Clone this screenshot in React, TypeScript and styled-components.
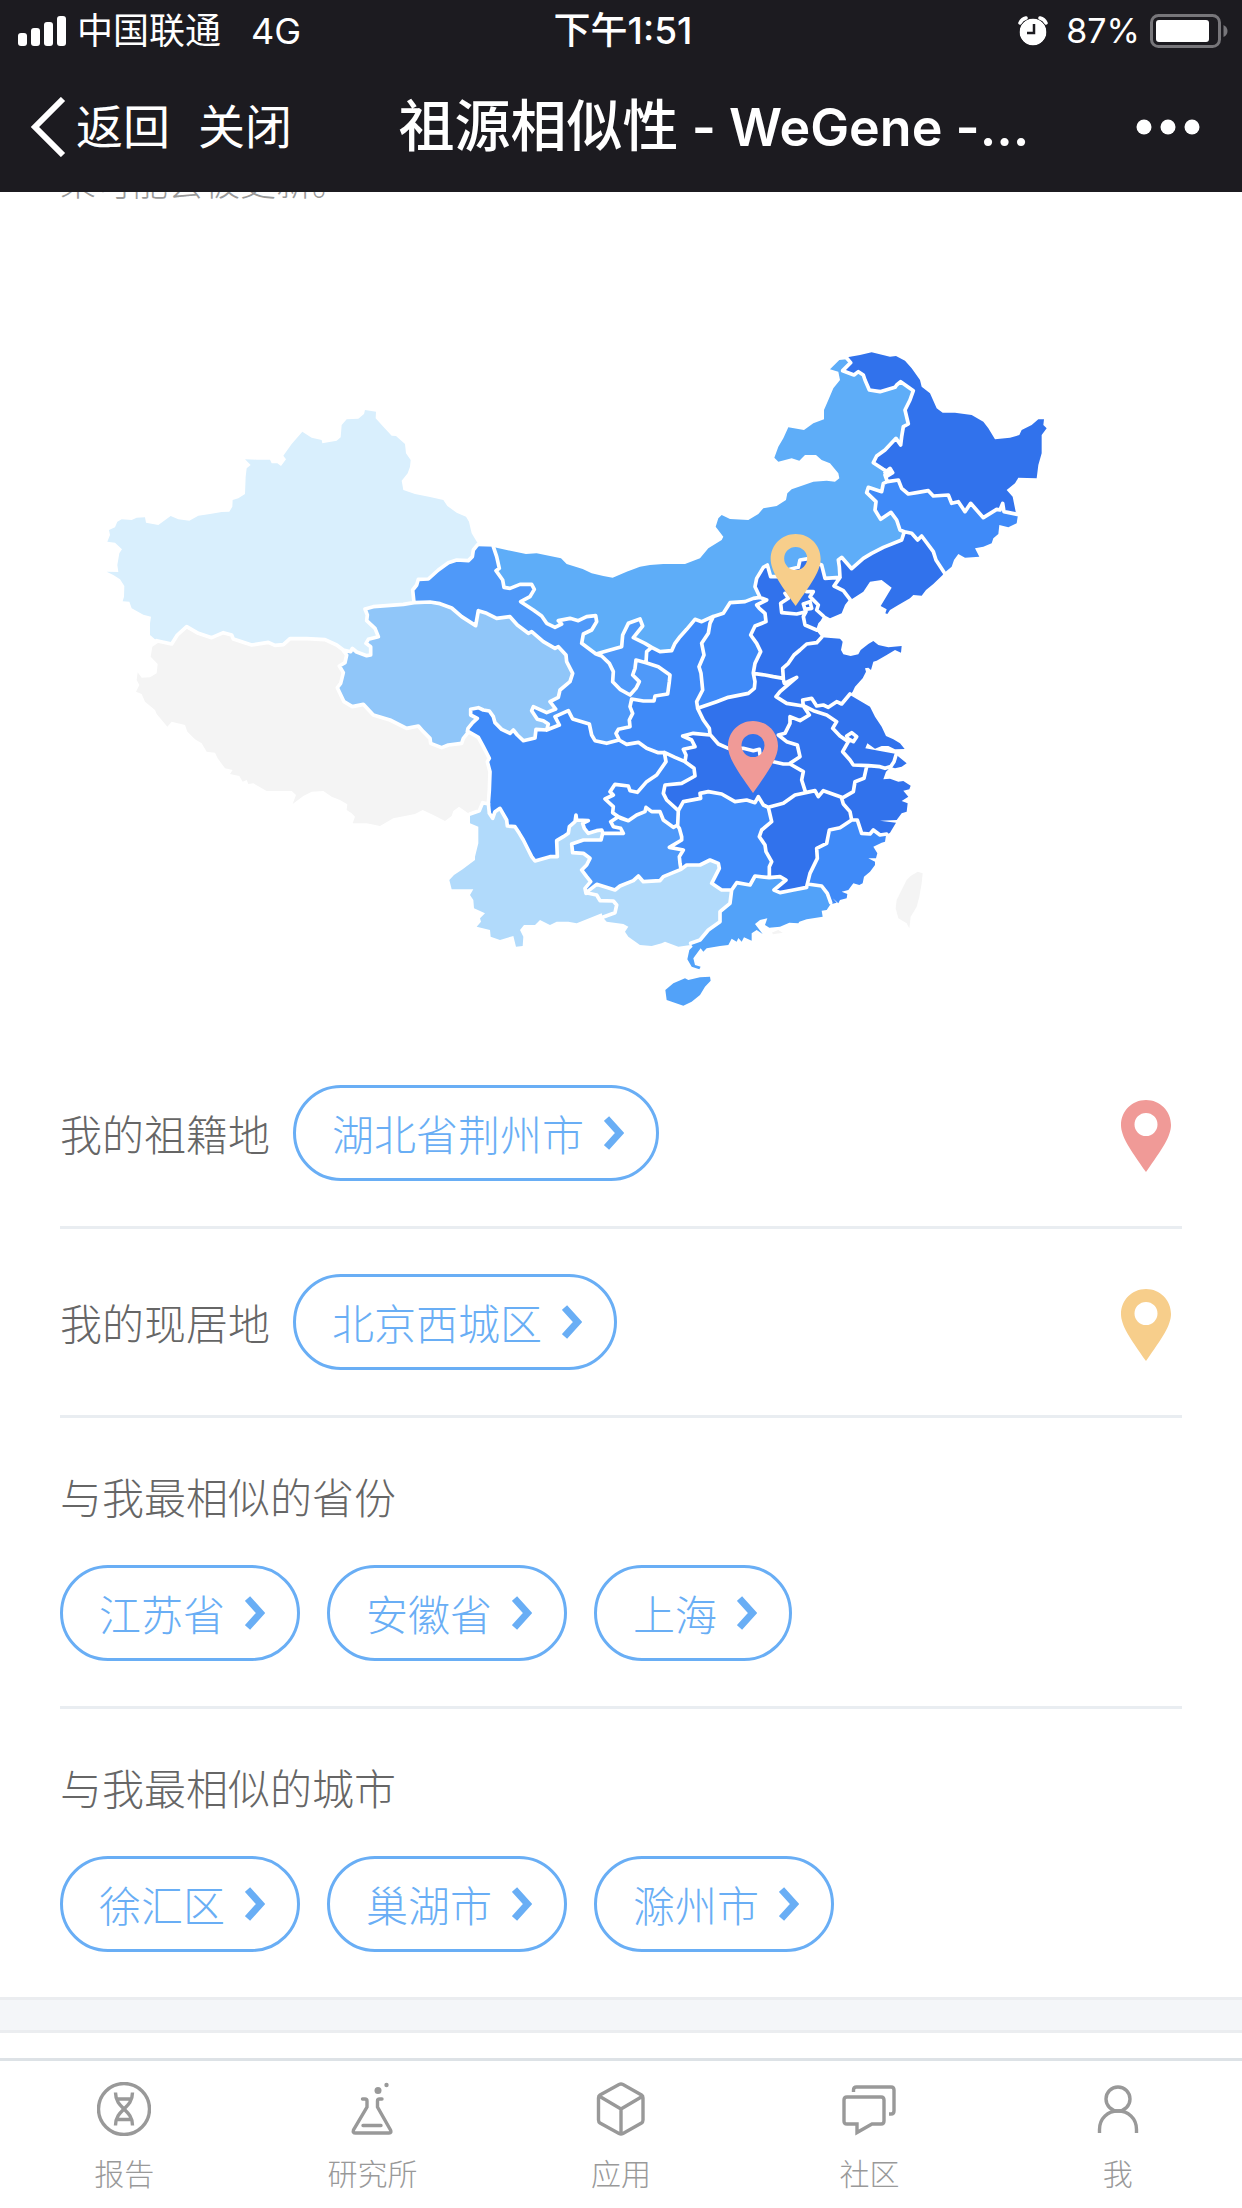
import React from 'react';
import styled, { createGlobalStyle } from 'styled-components';

const color = {
  bar: '#1c1b20',
  text: '#666666',
  muted: '#999999',
  link: '#69aef5',
  line: '#e9edf1',
  band: '#f4f6f9',
  origin: '#f09a97',
  home: '#f7ce8b',
};

const GlobalStyle = createGlobalStyle`
  * { box-sizing: border-box; }
  body {
    margin: 0;
    background: #ffffff;
    font-family: Inter, "Noto Sans CJK SC", sans-serif;
    color: ${color.text};
  }
  button { font: inherit; color: inherit; background: none; border: 0; padding: 0; cursor: pointer; }
`;

const Page = styled.div`
  display: flex;
  flex-direction: column;
  min-height: 100vh;
`;

const Header = styled.header`
  position: sticky;
  top: 0;
  z-index: 1;
  height: 192px;
  background: ${color.bar};
  color: #ffffff;
`;

const StatusBar = styled.div`
  display: grid;
  grid-template-columns: 1fr auto 1fr;
  align-items: center;
  height: 62px;
  padding: 0 14px 0 18px;
  font-size: 36px;
  line-height: 60px;
`;

const StatusGroup = styled.div<{ $end?: boolean }>`
  display: flex;
  align-items: center;
  justify-content: ${(p) => (p.$end ? 'flex-end' : 'flex-start')};
  gap: 10px;
`;

const Network = styled.span`
  margin-left: 20px;
`;

const Clock = styled.time`
  font-size: 37px;
  font-weight: 500;
`;

const BatteryText = styled.span`
  margin-left: 8px;
  font-size: 34px;
`;

const NavBar = styled.nav`
  display: flex;
  align-items: center;
  height: 130px;
  padding: 0 42px 0 30px;
`;

const NavButton = styled.button`
  && {
    display: flex;
    align-items: center;
    gap: 10px;
    font-size: 47px;
    line-height: 72px;
  }
  & + & { margin-left: 28px; }
`;

const Title = styled.h1`
  flex: 1;
  margin: 0;
  text-align: center;
  white-space: nowrap;
  font-size: 56px;
  line-height: 84px;
  font-weight: 500;
`;

const Latin = styled.span`
  font-size: 52px;
  font-weight: 600;
`;

const Main = styled.main`
  flex: 1;
`;

const Notice = styled.p`
  margin: -36px 60px 30px;
  font-size: 36px;
  line-height: 54px;
  font-weight: 300;
  color: ${color.muted};
`;

const MapDrawing = styled.svg`
  display: block;
  width: 100%;
  height: auto;
`;

const Details = styled.div`
  padding: 0 60px;
`;

const Row = styled.section<{ $stacked?: boolean }>`
  display: flex;
  flex-direction: ${(p) => (p.$stacked ? 'column' : 'row')};
  align-items: ${(p) => (p.$stacked ? 'flex-start' : 'center')};
  gap: ${(p) => (p.$stacked ? '30px' : '23px')};
  padding: 45px 0;
  border-bottom: 3px solid ${color.line};
  &:last-child { border-bottom: 0; }
`;

const Label = styled.h2<{ $inline?: boolean }>`
  margin: 0;
  padding-top: ${(p) => (p.$inline ? '6px' : '0')};
  font-size: 42px;
  line-height: 72px;
  font-weight: 300;
`;

const PinSlot = styled.span`
  display: flex;
  margin-left: auto;
  padding: 6px 11px 0 0;
`;

const Pills = styled.div`
  display: flex;
  flex-wrap: wrap;
  gap: 27px;
`;

const PillButton = styled.button`
  && {
    display: flex;
    align-items: center;
    gap: 20px;
    height: 96px;
    padding: 0 32px 0 36px;
    border: 3px solid ${color.link};
    border-radius: 48px;
    color: ${color.link};
    font-size: 42px;
    line-height: 72px;
    font-weight: 300;
  }
`;

const PillText = styled.span`
  padding-top: 6px;
`;

const Band = styled.div`
  height: 36px;
  background: ${color.band};
  border: solid #ebedf0;
  border-width: 3px 0;
`;

const TabBar = styled.nav`
  position: sticky;
  bottom: 0;
  display: flex;
  height: 150px;
  border-top: 3px solid #dde2e6;
  background: #ffffff;
`;

const Tab = styled.a`
  flex: 1;
  display: flex;
  flex-direction: column;
  align-items: center;
  gap: 14px;
  padding-top: 21px;
  color: ${color.muted};
  font-size: 30px;
  line-height: 48px;
  font-weight: 300;
  text-decoration: none;
`;

/* ---- Map geometry: border arcs shared between neighbouring provinces ---- */

type Point = [number, number];

const tiles: Record<string, Point> = {
  west: [270, 1170],
  mid: [1200, 1500],
  north: [1950, 990],
  east: [1920, 1800],
};

const arc = (...parts: [string, string][]): Point[] =>
  parts.flatMap(([tile, text]) => {
    const [ox, oy] = tiles[tile];
    const n = text.split(' ').map(Number);
    const points: Point[] = [];
    for (let i = 0; i < n.length; i += 2) points.push([n[i] + ox, n[i + 1] + oy]);
    return points;
  });

const arcs: Record<string, Point[]> = {
  xjOut: arc(['west', '200 752 180 735 180 700 183 680 160 674 125 655 118 635 98 634 102 620 103 588 90 568 70 555 50 545 85 546 82 525 88 490 96 478 75 458 52 455 60 435 57 420 75 412 82 395 95 388 125 390 140 383 165 382 168 398 205 405 242 378 265 388 298 392 325 377 360 372 395 366 418 365 427 350 428 330 445 325 465 312 467 260 470 235 482 225 465 208 500 209 540 209 545 220 562 220 573 228 588 208 580 197 605 162 637 125 665 143 695 150 697 160 740 152 752 142 755 105 770 88 805 86 822 72 825 60 858 65 857 85 880 110 905 137 918 138 945 162 948 190 962 210 960 230 953 250 935 272 940 300 975 312 1020 321 1060 330 1072 348 1100 368 1128 380 1137 395 1145 430 1163 460']),
  xjGs: arc(['west', '1163 464 1150 480 1147 500 1135 512 1100 510 1075 518 1045 540 1015 567 985 568 980 585 968 600 972 638']),
  xjQh: arc(['west', '972 638 940 643 900 646 850 650 825 657 832 675 830 692 855 715 865 740 835 748 828 760 842 770 842 795 830 797 800 786 787 775 782 785 760 780']),
  xjXz: arc(['west', '760 780 740 765 705 749 650 746 600 746 580 764 555 766 535 757 485 765 430 747 425 735 400 728 365 743 325 730 290 710 262 735 245 762 200 752']),
  xzOut: arc(['west', '205 758 187 770 182 800 203 822 200 850 180 862 155 863 143 847 140 870 148 885 138 905 155 912 165 935 195 960 200 972 232 1010 245 995 285 1005 292 1025 315 1048 335 1060 350 1085 375 1088 383 1105 405 1135 428 1140 420 1152 448 1158 458 1175 470 1170 475 1182 490 1180 530 1203 605 1203 618 1215 608 1242 640 1218 665 1205 700 1203 725 1220 750 1230 772 1243 770 1260 785 1270 795 1280 788 1300 830 1300 870 1308 910 1285 975 1272 998 1260 1030 1275 1065 1293 1085 1278 1090 1263 1107 1250 1138 1272']),
  xzQh: arc(['west', '760 782 770 795 765 818 748 828 760 848 752 880 742 893 762 935 787 950 820 943 850 975 900 990 950 1015 985 1008 1000 1025 1020 1045 1022 1060 1055 1073 1075 1065 1115 1060 1120 1045 1132 1030']),
  qhSc: arc(['mid', '202 695 204 685 218 668 232 655 212 645 212 628 235 623 250 630 268 633 280 650 285 668 305 688 330 700 340 690 352 705 370 722 405 714 408 688 440 690']),
  qhGs: arc(['mid', '42 308 90 306 120 311 155 324 185 350 227 377 235 332 260 340 290 355 330 350 352 375 385 400 395 395 430 425 465 445 475 440 498 465 500 485 518 520 510 545 480 570 475 592 450 605 467 627 440 638 400 620 395 632 412 658 430 662 445 672 440 690']),
  gsOut: arc(['mid', '233 139 283 140']),
  gsNm: arc(['mid', '280 140 290 170 298 205 288 212 308 240 312 262 330 265 360 253 395 253 403 268 390 290 362 305 400 330 425 348 440 370 465 382 485 372 475 362 510 355 535 362 560 350 587 347 590 365 575 390 550 402 545 430 565 445 588 462']),
  nmNx: arc(['mid', '588 462 630 450 665 440 668 405 685 370 720 357 728 378 700 413 735 430 755 442']),
  nxSx: arc(['mid', '755 442 740 455 738 488']),
  nxGs: arc(['mid', '738 488 708 480 705 505 698 525 718 545 708 565 690 585 660 568 638 545 640 515 628 490 605 468 588 462']),
  gsSx: arc(['mid', '738 488 775 500 810 525 808 545 803 582 765 588 762 603 730 603 695 597 690 620 698 640 688 660 690 680 655 688 648 700 657 718']),
  gsSc: arc(['mid', '440 690 478 675 465 650 505 632 518 657 568 672 575 705 585 722 620 730 657 720']),
  scSx: arc(['mid', '657 720 680 733 715 727 740 745 775 758 793 757']),
  scCq: arc(['mid', '793 757 798 785 770 825 740 845 712 877 690 872 685 858 645 853 630 875 640 885 615 897 640 920 638 938 662 955 685 962']),
  scGz: arc(['mid', '685 962 655 950 632 965 640 980 662 985 670 1000 610 1000']),
  scYn: arc(['mid', '608 998 605 990 590 992 565 1000 553 985 548 970 565 962 530 960 528 945 525 965 508 980 505 1000 490 1010 470 1022 472 1070 450 1070 405 1083 395 1070 385 1050 370 1020 358 1000 345 980 322 978 320 960 300 925 285 935 278 955 268 940']),
  scXz: arc(['mid', '205 695 235 712 250 740 268 775 262 785 270 815 268 870 265 910 268 940']),
  xzYn: arc(['mid', '266 912 248 908 238 932 210 942']),
  ynOut: arc(['mid', '210 942 210 970 235 980 235 1030 225 1070 225 1080 188 1108 162 1125 148 1140 155 1168 220 1168 210 1185 220 1200 222 1225 255 1240 240 1255 243 1265 230 1280 270 1290 272 1310 300 1320 340 1308 348 1340 368 1338 370 1310 360 1290 372 1275 405 1275 420 1260 450 1275 470 1265 505 1265 530 1270 560 1258 605 1240']),
  ynGx: arc(['mid', '558 1178 590 1185 600 1202 640 1203 650 1215 645 1238 608 1252']),
  ynGz: arc(['mid', '608 1000 603 1020 550 1020 515 1032 518 1058 550 1060 570 1075 560 1095 545 1110 560 1130 572 1145 555 1165 558 1180']),
  gzGx: arc(['mid', '558 1178 590 1153 645 1170 660 1158 700 1142 715 1128 730 1145 780 1142 790 1130 843 1108']),
  gzHn: arc(['mid', '843 1108 840 1090 838 1070 850 1050 808 1042 845 1020 845 1010 838 985 833 978']),
  gzCq: arc(['mid', '685 962 710 945 735 935 738 922 755 935 780 935 790 960 820 982 833 975']),
  cqHn: arc(['mid', '833 975 835 932']),
  cqHb: arc(['mid', '835 932 800 900 790 880 795 855 845 850 885 828 882 805 855 785']),
  cqSx: arc(['mid', '793 757 825 772 855 785']),
  sxHb: arc(['mid', '855 785 858 765 850 748 885 740 875 720 848 708 880 700 930 705']),
  sxHa: arc(['mid', '930 703 928 685 910 660 893 625']),
  sxSxi: arc(['mid', '893 625 890 605 908 570 903 520 897 500 912 465 905 430 925 400 930 370 940 350']),
  nmSx: arc(['mid', '755 442 780 455 815 452 825 430 840 410 860 388 885 358 905 365 938 350']),
  nmSxi: arc(['mid', '938 350 970 340 990 308 1035 305 1060 295 1080 292']),
  sxiHe: arc(['mid', '1080 292 1100 300 1070 315 1078 325 1095 340 1098 365 1065 378 1052 405 1070 430 1082 455 1065 490 1060 518']),
  sxiHa: arc(['mid', '1060 520 1065 545 1063 565 1045 580 985 592 950 605 893 625']),
  heHa: arc(['mid', '1060 520 1095 525 1120 530 1150 535']),
  heSd: arc(['east', '430 235 428 205 445 190 462 165 480 150 500 132 530 128 545 112']),
  haSd: arc(['east', '430 238 433 250 470 232 455 245 420 275 408 290 440 310 490 318']),
  sdJs: arc(['east', '490 318 488 300 515 295 530 318 550 315 565 322 590 305 605 312 630 282']),
  jsAh: arc(['east', '492 318 520 332 560 345 590 365 578 385 600 408 625 425 608 455 630 480 640 495 685 497']),
  haAh: arc(['east', '490 318 508 345 480 362 450 350 450 370 435 400 415 405 440 425 472 435 480 470 450 490']),
  haHb: arc(['east', '210 403 235 432 265 445 310 445 340 452 358 448 360 465 400 485 430 492 450 492']),
  hbAh: arc(['east', '450 492 490 515 485 540 497 578']),
  hbJx: arc(['east', '497 578 465 585 430 610 385 622']),
  hbHn: arc(['east', '385 622 370 615 355 590 345 608 320 600 285 605 245 582 205 575 180 580 182 595 130 605 115 632']),
  hnJx: arc(['east', '385 622 395 665 365 690 358 710 375 735 378 755 395 785 388 800 388 833']),
  hnGd: arc(['east', '388 833 345 828 330 855 290 848 275 870']),
  hnGx: arc(['east', '123 808 140 795 180 795 210 780 235 790 238 805 215 850 245 870 275 870']),
  gxGd: arc(['east', '275 870 270 910 240 935 240 965 205 990 180 1020 152 1030']),
  jxGd: arc(['east', '388 833 420 830 438 840 402 870 420 878 460 870 500 862']),
  jxFj: arc(['east', '500 860 510 820 532 775 530 745 560 730 568 690 600 683 635 660']),
  fjGd: arc(['east', '502 852 545 858 562 880 572 908']),
  jxAh: arc(['east', '497 578 525 572 535 590 550 572 605 592']),
  jxZj: arc(['east', '605 595 610 612 630 635 635 660']),
  ahZj: arc(['east', '605 595 640 575 645 545 672 535 680 500 685 497']),
  jsZj: arc(['east', '685 497 720 500 735 505 750 500']),
  zjFj: arc(['east', '635 660 652 660 665 700 690 702 700 690 720 705 740 702']),
  gxOut: arc(['mid', '872 1335 835 1340 795 1325 785 1330 755 1338 720 1335 685 1310 675 1295 685 1280 670 1272 620 1265 608 1252']),
  jsOut: arc(['east', '630 285 690 320 705 350 725 380 738 408 760 418 780 430 794 447 765 448 745 438 725 438 705 446 682 430 676 445 720 453 765 461 800 490 785 500 765 505 750 500']),
  zjOut: arc(['east', '750 503 738 515 730 538 750 536 775 545 790 543 812 557 808 568 790 572 805 590 785 603 803 610 800 635 785 640 770 660 720 662 768 668 750 698 738 706']),
  fjOut: arc(['east', '738 706 735 725 725 728 700 740 712 760 708 775 685 775 705 785 705 795 690 815 672 830 668 850 658 855 640 850 625 870 605 875 622 882 620 895 600 900 595 910 578 895 590 908 575 912']),
  gdOut: arc(['east', '572 912 560 930 545 932 548 950 500 958 478 965 475 970 448 968 420 980 388 983 375 975 382 955 360 960 345 972 368 1002 350 990 335 1000 335 1022 312 1012 305 1025 295 1014 290 1025 275 1016 265 1035 240 1038 200 1045 190 1055 182 1045 160 1075 165 1095 182 1100 178 1108 155 1100 142 1078 148 1050 158 1040 152 1032']),
  sdOut: arc(['east', '545 112 600 116 608 125 603 150 610 163 632 168 655 163 662 150 685 132 700 123 715 135 745 142 785 138 783 158 765 150 740 165 710 182 700 185 693 210 685 203 675 205 678 215 668 235 645 260 638 275 630 285']),
  nmHe: arc(['north', '330 802 315 770 320 745 340 712 352 705 362 740 385 740 420 718 445 712 450 690 480 685 500 700 515 705 525 745 570 742']),
  heLn: arc(['north', '570 742 552 768 580 782 600 808']),
  nmLn: arc(['north', '570 742 568 710 565 690 575 682 605 716 640 685 665 670 700 652 755 630 763 605']),
  nmJl: arc(['north', '763 605 750 600 740 570 723 547 692 568 675 540 678 515 650 488 655 472 695 485 700 460 712 455']),
  nmHlj: arc(['north', '712 455 705 435 720 428 700 418 670 398 680 378 705 360 738 325 752 345 755 320 760 290 775 282 765 240 780 210 790 182 752 155 740 165 735 172 690 185 658 180 645 150 640 135 625 125 612 135 578 122 602 98 590 84']),
  hljJl: arc(['north', '712 455 745 450 755 475 775 492 800 488 835 482 850 498 895 495 905 520 925 515 945 545 962 520 1000 563 1040 538 1050 540 1058 520 1062 545 1102 553']),
  jlLn: arc(['north', '763 605 785 610 803 630 815 618 850 665 858 690 882 727']),
  hljOut: arc(['north', '592 82 630 75 665 67 720 80 738 78 765 92 785 115 810 150 815 170 840 190 860 235 878 248 915 248 965 255 1000 275 1015 295 1035 328 1080 323 1108 315 1115 300 1145 285 1165 268 1182 268 1180 285 1190 295 1175 315 1175 370 1165 405 1160 445 1105 443 1095 460 1070 480 1088 500 1097 545']),
  jlOut: arc(['north', '1103 560 1100 580 1075 592 1048 585 1045 612 1030 625 1025 640 1000 650 975 655 988 680 945 683 925 672 912 690 905 710 885 727']),
  lnOut: arc(['north', '878 735 850 762 828 780 815 797 790 795 780 805 745 825 720 840 712 852 706 850 710 838 692 828 725 773 695 750 660 755 640 785 605 808']),
  heOut: arc(['north', '598 808 585 825 575 850 540 865 522 855 512 872 505 880 498 900 515 922']),
  nmOut: arc(
    ['north', '590 88 568 90 540 118 565 125 570 150 550 175 535 210 522 240 522 268 490 280 462 300 415 292 400 325 385 350 373 383 385 395 425 385 448 392 465 375 498 375 515 390 540 400 565 430 568 445 555 455 530 452 490 455 462 465 425 478 412 490 408 510 380 528 340 535 325 552 295 570 240 567 215 555 205 565 197 590 220 620 215 630 175 655 150 685 105 702 40 702 0 705'],
    ['mid', '720 200 680 215 638 233 610 228 575 220 548 207 500 192 483 175 410 160 378 162 283 142'],
  ),
  hainanOut: arc(['east', '135 1135 145 1140 180 1132 210 1130 212 1142 195 1160 180 1185 155 1205 130 1217 80 1200 76 1170 100 1150']),
  taiwanOut: arc(['east', '833 815 848 820 845 850 838 890 830 920 812 950 808 985 800 970 775 955 767 925 770 900 785 870 800 840 812 828']),
  hongkongOut: arc(['east', '395 998 415 990 428 998 400 1003']),
  // Beijing, Tianjin, Shanghai and inland lake outlines
  beijing: arc(['north', '405 790 415 805 392 820 395 848 440 852 468 845 460 860 465 885 500 900']),
  tianjin: arc(['north', '470 785 490 785 480 800 505 825 500 840 520 858']),
  enclave: arc(['north', '460 822 480 815 485 835 465 838 460 822']),
  shanghai: arc(['east', '768 465 762 485 750 503']),
  lake: arc(['east', '620 408 635 398 650 410 640 425 622 415']),
  nenjiang: arc(['north', '705 428 720 415 728 428 712 438']),
};

const shades = {
  none: '#f4f4f4',
  faint: '#d9effd',
  pale: '#b1dafb',
  soft: '#90c6f9',
  sky: '#5eadf8',
  azure: '#52a2f9',
  clear: '#4f99f9',
  strong: '#3f8af8',
  deep: '#3172ec',
};

const provinces: { name: string; shade: keyof typeof shades; ring: string }[] = [
  { name: '新疆', shade: 'faint', ring: 'xjOut xjGs xjQh xjXz' },
  { name: '西藏', shade: 'none', ring: '-xjXz xzQh scXz xzYn -xzOut' },
  { name: '青海', shade: 'soft', ring: 'xjQh xzQh qhSc -qhGs' },
  { name: '甘肃', shade: 'clear', ring: '-xjGs gsOut gsNm -nxGs gsSx -gsSc -qhGs' },
  { name: '宁夏', shade: 'clear', ring: 'nmNx nxSx nxGs' },
  { name: '内蒙古', shade: 'sky', ring: 'nmOut gsNm nmNx nmSx nmSxi nmHe nmLn nmJl nmHlj' },
  { name: '黑龙江', shade: 'deep', ring: 'hljOut -hljJl nmHlj' },
  { name: '吉林', shade: 'strong', ring: 'hljJl jlOut -jlLn nmJl' },
  { name: '辽宁', shade: 'deep', ring: 'jlLn lnOut -heLn nmLn' },
  { name: '河北', shade: 'deep', ring: 'nmHe heLn heOut -heSd -heHa -sxiHe' },
  { name: '山西', shade: 'strong', ring: 'nmSxi sxiHe sxiHa sxSxi' },
  { name: '陕西', shade: 'strong', ring: 'nmSx -sxSxi -sxHa -sxHb -cqSx -scSx -gsSx -nxSx' },
  { name: '四川', shade: 'strong', ring: 'qhSc gsSc scSx scCq scGz scYn -scXz' },
  { name: '重庆', shade: 'strong', ring: 'cqSx -cqHb -cqHn -gzCq -scCq' },
  { name: '贵州', shade: 'clear', ring: 'gzCq -gzHn -gzGx -ynGz -scGz' },
  { name: '云南', shade: 'pale', ring: 'xzYn ynOut -ynGx -ynGz scYn' },
  { name: '广西', shade: 'pale', ring: 'gzGx hnGx gxGd gxOut -ynGx' },
  { name: '湖北', shade: 'deep', ring: 'cqHb sxHb haHb hbAh hbJx hbHn' },
  { name: '河南', shade: 'deep', ring: '-sxiHa heHa haSd haAh -haHb sxHa' },
  { name: '山东', shade: 'deep', ring: 'heSd sdOut -sdJs -haSd' },
  { name: '江苏', shade: 'deep', ring: 'sdJs jsOut -jsZj -jsAh' },
  { name: '安徽', shade: 'deep', ring: 'jsAh -ahZj -jxAh -hbAh -haAh' },
  { name: '浙江', shade: 'deep', ring: 'jsZj zjOut -zjFj -jxZj ahZj' },
  { name: '福建', shade: 'strong', ring: 'zjFj fjOut -fjGd jxFj' },
  { name: '江西', shade: 'deep', ring: 'jxAh jxZj -jxFj -jxGd -hnJx -hbJx' },
  { name: '湖南', shade: 'strong', ring: '-hbHn hnJx hnGd -hnGx gzHn cqHn' },
  { name: '广东', shade: 'azure', ring: '-hnGd jxGd fjGd gdOut -gxGd' },
  { name: '海南', shade: 'azure', ring: 'hainanOut' },
  { name: '台湾', shade: 'none', ring: 'taiwanOut' },
  { name: '香港', shade: 'none', ring: 'hongkongOut' },
];

const ringPath = (ring: string) =>
  'M' +
  ring
    .split(' ')
    .flatMap((key) => (key[0] === '-' ? [...arcs[key.slice(1)]].reverse() : arcs[key]))
    .map((p) => p.join(' '))
    .join('L') +
  'Z';

const borderPath = Object.entries(arcs)
  .filter(([key]) => !key.endsWith('Out'))
  .map(([, points]) => 'M' + points.map((p) => p.join(' ')).join('L'))
  .join('');

const PIN =
  'M25 0C11 0 0 11 0 25C0 36 8 48 25 72C42 48 50 36 50 25C50 11 39 0 25 0ZM25 13A11.5 11.5 0 1 1 25 36A11.5 11.5 0 1 1 25 13Z';

const Pin = ({ fill }: { fill: string }) => (
  <svg width="50" height="72" viewBox="0 0 50 72" aria-hidden="true">
    <path d={PIN} fill={fill} fillRule="evenodd" />
  </svg>
);

const ChinaMap = () => (
  <MapDrawing viewBox="0 720 3726 2400" role="img" aria-label="祖源相似性">
    {provinces.map((p) => (
      <path key={p.name} d={ringPath(p.ring)} fill={shades[p.shade]} />
    ))}
    <path d={borderPath} fill="none" stroke="#ffffff" strokeWidth="11" strokeLinejoin="round" strokeLinecap="round" />
    <path d={PIN} fill={color.home} fillRule="evenodd" transform="translate(2312 1602) scale(3)" />
    <path d={PIN} fill={color.origin} fillRule="evenodd" transform="translate(2184 2163) scale(3)" />
  </MapDrawing>
);

const Pill = ({ children }: { children: React.ReactNode }) => (
  <PillButton type="button">
    <PillText>{children}</PillText>
    <svg width="20" height="36" viewBox="0 0 20 36" fill="none" stroke="currentColor" strokeWidth="7" aria-hidden="true">
      <path d="M2.500 3.500L15.500 18L2.500 32.500" />
    </svg>
  </PillButton>
);

const tabs = [
  {
    label: '报告',
    icon: (
      <>
        <circle cx="27" cy="27" r="25.5" />
        <path d="M18.500 10.500C18.500 27 35.500 27 35.500 43.500M35.500 10.500C35.500 27 18.500 27 18.500 43.500M20 17H34M20 37.500H34" />
      </>
    ),
  },
  {
    label: '研究所',
    icon: (
      <>
        <path d="M16.500 17H19Q21 17 21 19V25L7.500 48Q6.500 51 9.500 51H43Q46 51 44.500 48L31.500 25V19Q31.500 17 33.500 17H36M17 43.500H35" strokeLinecap="round" />
        <circle cx="32" cy="8.500" r="3.500" fill="currentColor" stroke="none" />
        <circle cx="40.500" cy="3" r="2.200" fill="currentColor" stroke="none" />
      </>
    ),
  },
  {
    label: '应用',
    icon: (
      <path d="M25 2.500Q27 1.500 29 2.500L47.500 13Q49 14 49 16V38Q49 40 47.500 41L29 51.500Q27 52.500 25 51.500L6 41Q4.500 40 4.500 38V16Q4.500 14 6 13ZM5 14L27 27L49 14M27 27V52" />
    ),
  },
  {
    label: '社区',
    icon: (
      <path d="M11.500 10V8Q11.500 5 14.500 5H49Q52 5 52 8V29Q52 32 49 32H47M5 15H39Q42 15 42 18V39Q42 42 39 42H30L15 50.500V42H5Q2 42 2 39V18Q2 15 5 15Z" />
    ),
  },
  {
    label: '我',
    icon: (
      <>
        <circle cx="27" cy="17" r="12" />
        <path d="M8.500 51V47.500C8.500 36 17 29 27 29S45.500 36 45.500 47.500V51" />
      </>
    ),
  },
];

export default function App() {
  return (
    <>
      <GlobalStyle />
      <Page>
        <Header>
          <StatusBar>
            <StatusGroup>
              <svg width="49" height="30" viewBox="0 0 49 30" fill="#ffffff" aria-hidden="true">
                <rect x="0" y="17" width="9" height="13" rx="3" />
                <rect x="13" y="12" width="9" height="18" rx="3" />
                <rect x="26" y="6" width="9" height="24" rx="3" />
                <rect x="39" y="0" width="9" height="30" rx="3" />
              </svg>
              <span>中国联通</span>
              <Network>4G</Network>
            </StatusGroup>
            <Clock>下午1:51</Clock>
            <StatusGroup $end>
              <svg width="30" height="30" viewBox="0 0 30 30" aria-hidden="true">
                <circle cx="15" cy="16" r="13.500" fill="#ffffff" />
                <circle cx="15" cy="16" r="14.500" fill="none" stroke={color.bar} strokeWidth="2" />
                <path d="M2 7A9 9 0 0 1 8 2M28 7A9 9 0 0 0 22 2" fill="none" stroke="#ffffff" strokeWidth="3.500" strokeLinecap="round" />
                <path d="M16 8V17H9" fill="none" stroke={color.bar} strokeWidth="2.500" />
              </svg>
              <BatteryText>87%</BatteryText>
              <svg width="78" height="34" viewBox="0 0 78 34" aria-hidden="true">
                <rect x="1.500" y="1.500" width="68" height="31" rx="7" fill="none" stroke="#77767a" strokeWidth="3" />
                <rect x="6" y="6" width="53" height="22" rx="3" fill="#ffffff" />
                <path d="M73.500 11Q77.500 13 77.500 17T73.500 23Z" fill="#77767a" />
              </svg>
            </StatusGroup>
          </StatusBar>
          <NavBar>
            <NavButton type="button">
              <svg width="36" height="60" viewBox="0 0 36 60" fill="none" stroke="#ffffff" strokeWidth="6" aria-hidden="true">
                <path d="M33 2L5 30L33 58" />
              </svg>
              返回
            </NavButton>
            <NavButton type="button">关闭</NavButton>
            <Title>祖源相似性<Latin> - WeGene -...</Latin></Title>
            <NavButton type="button" aria-label="更多">
              <svg width="64" height="16" viewBox="0 0 64 16" fill="#ffffff" aria-hidden="true">
                <circle cx="8" cy="8" r="7.500" />
                <circle cx="32" cy="8" r="7.500" />
                <circle cx="56" cy="8" r="7.500" />
              </svg>
            </NavButton>
          </NavBar>
        </Header>
        <Main>
          <Notice>果可能会被更新。</Notice>
          <ChinaMap />
          <Details>
            <Row>
              <Label $inline>我的祖籍地</Label>
              <Pill>湖北省荆州市</Pill>
              <PinSlot><Pin fill={color.origin} /></PinSlot>
            </Row>
            <Row>
              <Label $inline>我的现居地</Label>
              <Pill>北京西城区</Pill>
              <PinSlot><Pin fill={color.home} /></PinSlot>
            </Row>
            <Row $stacked>
              <Label>与我最相似的省份</Label>
              <Pills>
                {['江苏省', '安徽省', '上海'].map((name) => <Pill key={name}>{name}</Pill>)}
              </Pills>
            </Row>
            <Row $stacked>
              <Label>与我最相似的城市</Label>
              <Pills>
                {['徐汇区', '巢湖市', '滁州市'].map((name) => <Pill key={name}>{name}</Pill>)}
              </Pills>
            </Row>
          </Details>
          <Band />
        </Main>
        <TabBar>
          {tabs.map((tab) => (
            <Tab key={tab.label} href="#">
              <svg width="54" height="54" viewBox="0 0 54 54" fill="none" stroke="currentColor" strokeWidth="3.400" aria-hidden="true">
                {tab.icon}
              </svg>
              {tab.label}
            </Tab>
          ))}
        </TabBar>
      </Page>
    </>
  );
}
